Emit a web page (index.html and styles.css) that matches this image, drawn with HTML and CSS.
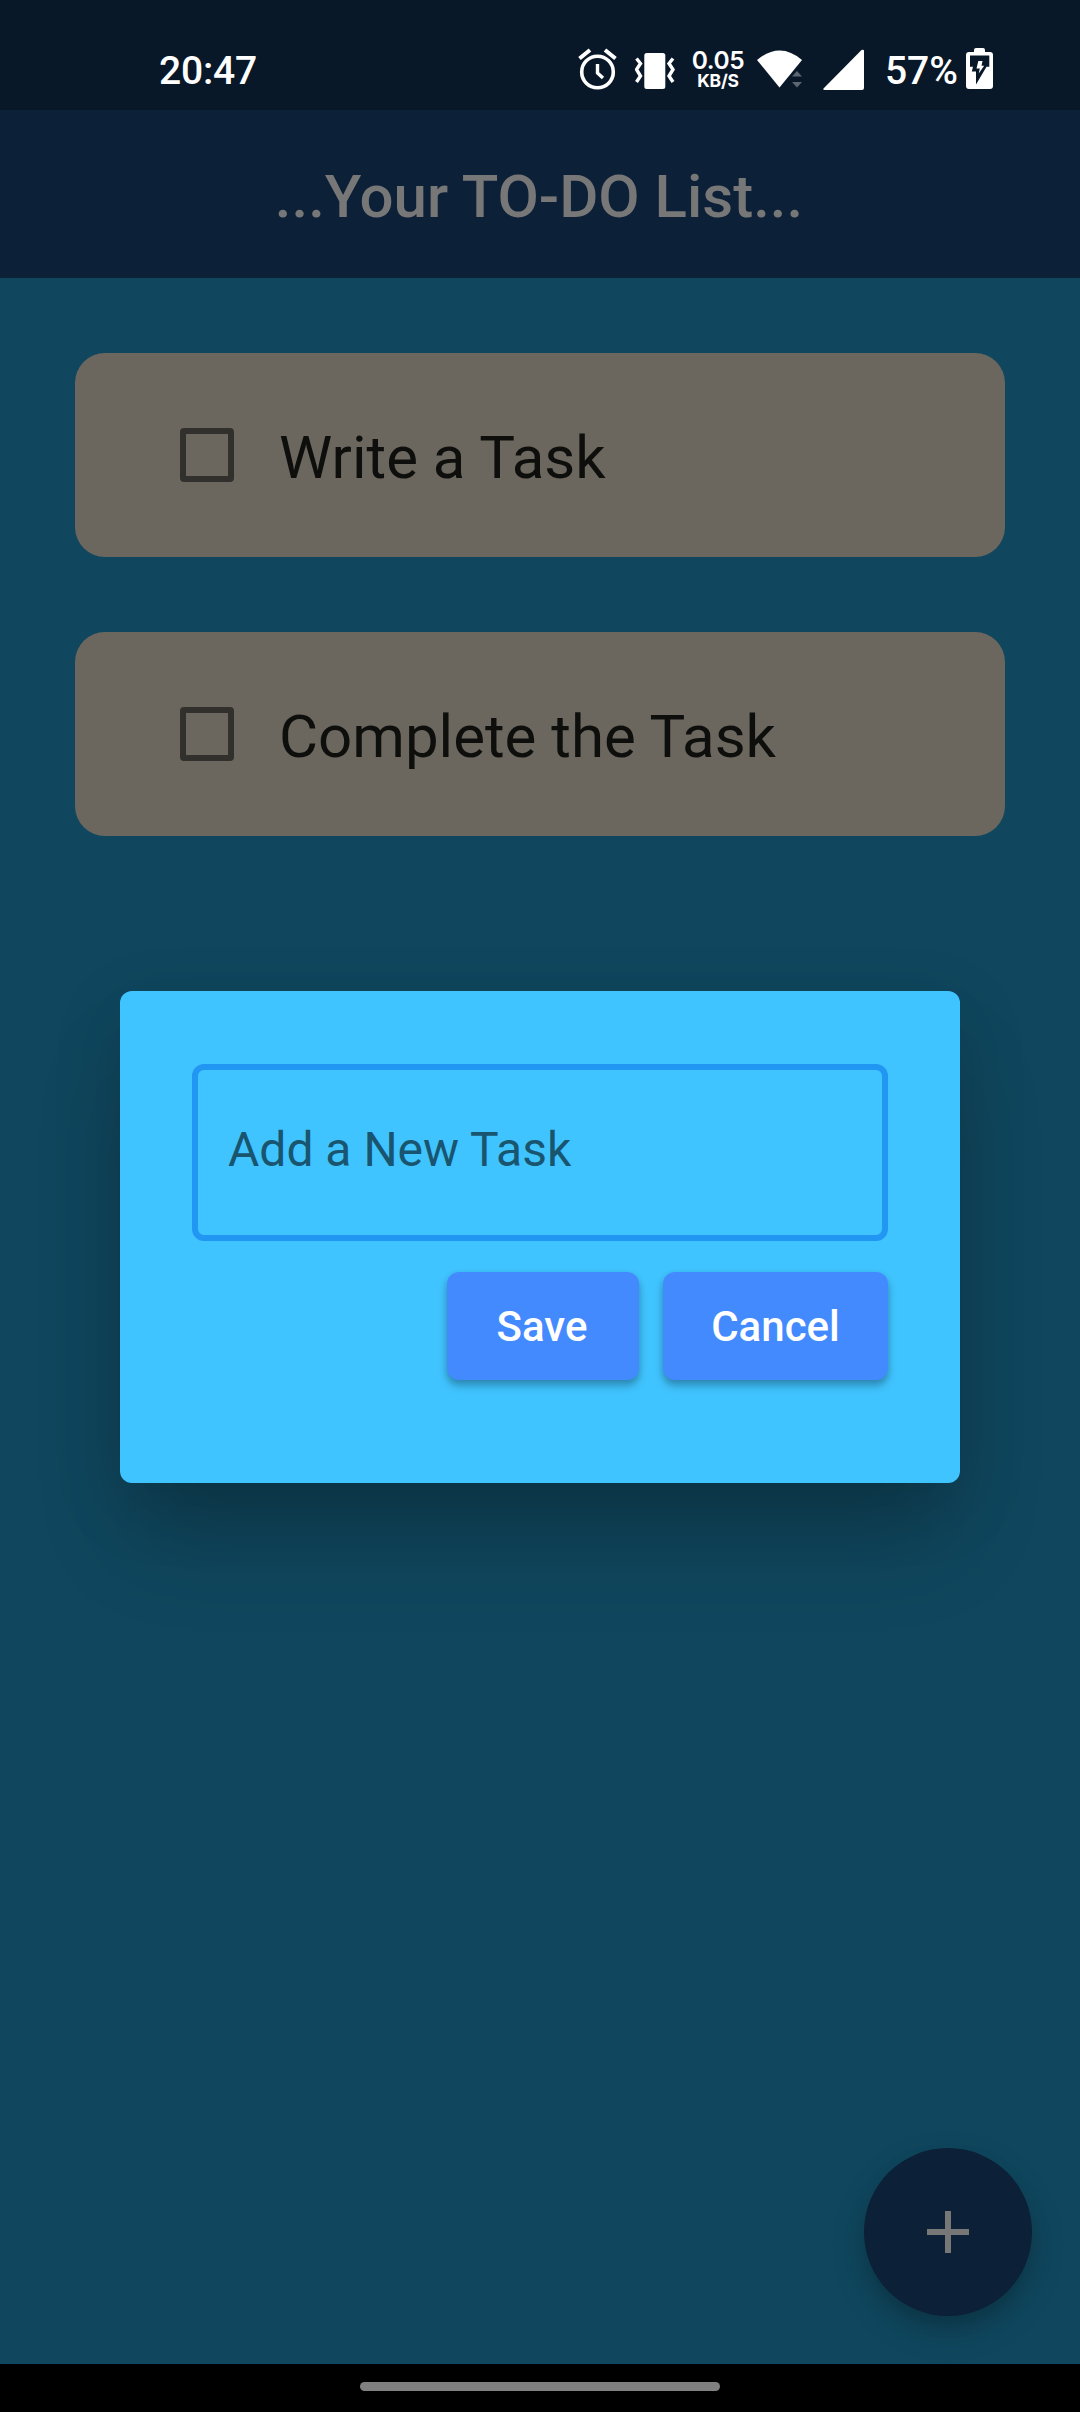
FILE: index.html
```html
<!DOCTYPE html>
<html lang="en">
<head>
<meta charset="utf-8">
<title>To-Do List</title>
<link rel="stylesheet" href="styles.css">
</head>
<body>
<div class="screen">
  <header class="status-bar">
    <span class="time">20:47</span>
    <div class="status-icons">
      <svg class="alarm" width="40" height="44" viewBox="0 0 40 44" fill="none" stroke="#fff"><circle cx="19.5" cy="25" r="15.8" stroke-width="3.6"/><path d="M1.5 11.5 12 3M37.5 11.5 27 3" stroke-width="4"/><path d="M19.5 17v9l5.5 5" stroke-width="3.4"/></svg>
      <svg class="vibrate" width="40" height="38" viewBox="0 0 40 38"><rect x="9.3" y="1" width="21" height="36" rx="2.5" fill="#fff"/><path d="M1.5 6.500l4 5-4 6 4 6.500-4 6M38 6.500l-4 5 4 6-4 6.500 4 6" fill="none" stroke="#fff" stroke-width="3.4"/></svg>
      <div class="speed"><span class="speed-value">0.05</span><span class="speed-unit">KB/S</span></div>
      <svg class="wifi" width="46" height="38" viewBox="0 0 46 38"><path d="M0 10Q23-9 45 10L22.500 37.500Z" fill="#fff"/><path d="M35 26.500l5-5.500 5 5.500zM35 32h10l-5 5.500z" fill="#5b6672"/></svg>
      <svg class="signal" width="42" height="42" viewBox="0 0 42 42"><path d="M.5 39.500 38.500 1Q41 0 41 2V39q0 2-2 2H2Q-.5 41 .5 39.500" fill="#fff"/></svg>
      <span class="percent">57%</span>
      <svg class="battery" width="27" height="41" viewBox="0 0 27 41"><path d="M8 4V2q0-2 2-2h7q2 0 2 2v2h5q3 0 3 3v31q0 3-3 3H3q-3 0-3-3V7q0-3 3-3z" fill="#fff"/><path d="M4 7.500H23.300V18.700H20.500L10 36.500V23.500H5.800L7 18.700H4z" fill="#091829"/><path d="M12.300 13H16.500L15.500 17.800H18.200L12.700 25.500L13.800 20.500H10.500z" fill="#fff"/></svg>
    </div>
  </header>
  <div class="app-bar"><h1>...Your TO-DO List...</h1></div>
  <main class="content">
    <div class="task"><span class="checkbox"></span><span class="label">Write a Task</span></div>
    <div class="task"><span class="checkbox"></span><span class="label">Complete the Task</span></div>
  </main>
  <button class="fab" aria-label="Add task"><svg width="42" height="42" viewBox="0 0 42 42"><path d="M18 0h6v18h18v6H24v18h-6V24H0v-6h18z" fill="#777"/></svg></button>
  <section class="dialog">
    <div class="field">Add a New Task</div>
    <div class="actions"><button class="save">Save</button><button class="cancel">Cancel</button></div>
  </section>
  <footer class="nav-bar"><div class="handle"></div></footer>
</div>
</body>
</html>
```
FILE: styles.css
```css
* { box-sizing: border-box; }
body { margin: 0; font-family: Roboto, "Noto Sans", sans-serif; }
button { border: 0; padding: 0; font: inherit; }
.screen {
  position: relative;
  width: 1080px;
  height: 2412px;
  display: flex;
  flex-direction: column;
  overflow: hidden;
  background: #10475e;
}
.status-bar {
  height: 110px;
  flex: none;
  display: flex;
  justify-content: space-between;
  align-items: flex-start;
  padding: 0 87px 0 159px;
  background: #091829;
  color: #fff;
  font-weight: 500;
  font-size: 39px;
  line-height: 46px;
}
.time, .percent { margin-top: 48px; }
.time { letter-spacing: -.2px; }
.status-icons { display: flex; align-items: flex-start; }
.alarm { margin: 47px 17px 0 0; }
.vibrate { margin: 52px 17px 0 0; }
.speed { width: 52px; margin: 48px 13px 0 0; display: flex; flex-direction: column; align-items: center; font-family: Inter, sans-serif; font-weight: 600; }
.speed-value { font-size: 24.5px; line-height: 24px; letter-spacing: -.4px; }
.speed-unit { font-size: 17.5px; line-height: 17px; letter-spacing: -.3px; font-weight: 700; }
.wifi { margin: 50px 20px 0 0; }
.signal { margin: 49px 20px 0 0; }
.percent { margin-right: 8px; }
.battery { margin-top: 48px; }
.app-bar {
  height: 168px;
  flex: none;
  display: flex;
  justify-content: center;
  padding: 52px 2px 0 0;
  background: #0c2038;
}
h1 { margin: 0; font-size: 60px; line-height: 70px; font-weight: 500; color: #777; }
.content {
  flex: 1;
  display: flex;
  flex-direction: column;
  gap: 75px;
  padding: 75px;
}
.task {
  height: 204px;
  display: flex;
  align-items: center;
  gap: 45px;
  padding-left: 105px;
  border-radius: 30px;
  background: #6b675f;
}
.checkbox { width: 54px; height: 54px; border: 6px solid #31302c; border-radius: 4px; }
.label { font-size: 60px; line-height: 70px; padding-top: 6px; color: #0e0f0c; }
.dialog {
  position: absolute;
  left: 120px;
  top: 991px;
  width: 840px;
  height: 492px;
  padding: 73px 72px 0;
  border-radius: 12px;
  background: #40c4ff;
  box-shadow: 0 66px 90px -12px rgba(0,0,0,.2), 0 20px 70px 0 rgba(0,0,0,.13);
}
.field {
  height: 177px;
  padding: 0 30px;
  border: 6px solid #2196f3;
  border-radius: 12px;
  font-size: 48px;
  line-height: 160px;
  color: #19556f;
}
.actions { display: flex; justify-content: flex-end; gap: 24px; margin-top: 31px; }
.actions button {
  height: 108px;
  border-radius: 12px;
  background: #448aff;
  color: #fff;
  font-size: 42px;
  font-weight: 500;
  box-shadow: 0 6px 8px 0 rgba(0,0,0,.25), 0 2px 6px 0 rgba(0,0,0,.1);
}
.actions .save { width: 192px; padding-right: 2px; }
.cancel { width: 225px; }
.fab {
  position: absolute;
  left: 864px;
  top: 2148px;
  width: 168px;
  height: 168px;
  border-radius: 50%;
  display: grid;
  place-items: center;
  background: #0c2038;
  box-shadow: 0 12px 20px -2px rgba(0,0,0,.16), 0 14px 36px 0 rgba(0,0,0,.14);
}
.nav-bar {
  height: 48px;
  flex: none;
  display: flex;
  justify-content: center;
  padding-top: 18px;
  background: #000;
}
.handle { width: 360px; height: 9px; border-radius: 5px; background: #808080; }
```
